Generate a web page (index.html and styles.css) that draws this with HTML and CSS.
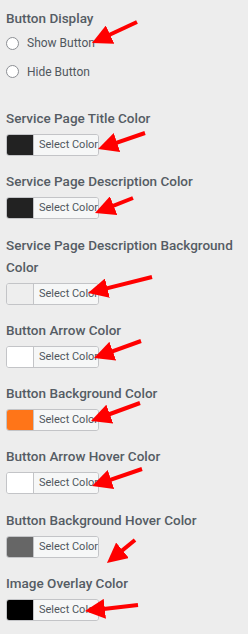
FILE: index.html
```html
<!DOCTYPE html>
<html lang="en">
<head>
    <meta charset="UTF-8">
    <meta name="viewport" content="width=device-width, initial-scale=1.0">
    <title>Service Settings</title>
    <link rel="stylesheet" href="styles.css">
</head>
<body>
    <div class="panel">
        <div class="field field-radio">
            <div class="field-label">Button Display</div>
            <label class="radio-row"><span class="radio"></span>Show Button</label>
            <label class="radio-row"><span class="radio"></span>Hide Button</label>
        </div>

        <div class="field">
            <div class="field-label">Service Page Title Color</div>
            <button class="color-btn"><span class="swatch swatch-dark"></span><span class="color-text">Select Color</span></button>
        </div>

        <div class="field">
            <div class="field-label">Service Page Description Color</div>
            <button class="color-btn"><span class="swatch swatch-dark"></span><span class="color-text">Select Color</span></button>
        </div>

        <div class="field">
            <div class="field-label">Service Page Description Background Color</div>
            <button class="color-btn"><span class="swatch swatch-light"></span><span class="color-text">Select Color</span></button>
        </div>

        <div class="field">
            <div class="field-label">Button Arrow Color</div>
            <button class="color-btn"><span class="swatch swatch-white"></span><span class="color-text">Select Color</span></button>
        </div>

        <div class="field">
            <div class="field-label">Button Background Color</div>
            <button class="color-btn"><span class="swatch swatch-orange"></span><span class="color-text">Select Color</span></button>
        </div>

        <div class="field">
            <div class="field-label">Button Arrow Hover Color</div>
            <button class="color-btn"><span class="swatch swatch-white"></span><span class="color-text">Select Color</span></button>
        </div>

        <div class="field">
            <div class="field-label">Button Background Hover Color</div>
            <button class="color-btn"><span class="swatch swatch-gray"></span><span class="color-text">Select Color</span></button>
        </div>

        <div class="field">
            <div class="field-label">Image Overlay Color</div>
            <button class="color-btn"><span class="swatch swatch-black"></span><span class="color-text">Select Color</span></button>
        </div>
    </div>

    <!-- annotation arrows drawn over the screenshot -->
    <svg class="arrows" width="248" height="634" viewBox="0 0 248 634">
        <defs>
            <marker id="head" viewBox="0 0 20 20" refX="10" refY="10" markerWidth="20" markerHeight="20" markerUnits="userSpaceOnUse" orient="auto">
                <path d="M0,0 L20,10 L0,20 z" fill="#ff0000"/>
            </marker>
        </defs>
        <g stroke="#ff0000" stroke-width="4" marker-end="url(#head)">
            <line x1="137" y1="22" x2="101" y2="38.8"/>
            <line x1="145" y1="133" x2="107.5" y2="145.8"/>
            <line x1="133" y1="198" x2="104.3" y2="209.3"/>
            <line x1="152" y1="277" x2="97.7" y2="290.6"/>
            <line x1="141" y1="341" x2="103.4" y2="354.6"/>
            <line x1="140" y1="403" x2="100.4" y2="417.5"/>
            <line x1="142" y1="469" x2="101.5" y2="482.8"/>
            <line x1="135" y1="540" x2="114.7" y2="556.6"/>
            <line x1="138" y1="605" x2="94.9" y2="609.9"/>
        </g>
    </svg>
</body>
</html>
```

FILE: styles.css
```css
* {
    margin: 0;
    padding: 0;
    box-sizing: border-box;
}

body {
    font-family: Roboto, "Noto Sans", Arial, sans-serif;
    background: #ededed;
    color: #50575e;
    width: 248px;
    height: 634px;
    overflow: hidden;
    position: relative;
}

.panel {
    padding: 7px 6px 0;
    display: flex;
    flex-direction: column;
}

.field {
    display: flex;
    flex-direction: column;
    align-items: flex-start;
    margin-bottom: 14.3px;
}

.field-radio {
    margin-bottom: 21px;
}

.field-label {
    font-size: 13.5px;
    font-weight: 500;
    line-height: 22px;
    color: #555c64;
    margin-bottom: 5px;
}

.field-radio .field-label {
    margin-bottom: 0;
}

.radio-row {
    display: flex;
    align-items: center;
    gap: 8px;
    height: 29px;
    font-size: 12px;
    color: #50575e;
}

.radio-row:first-of-type {
    height: 28px;
}

.radio {
    width: 13px;
    height: 13px;
    border: 1px solid #8c8f94;
    border-radius: 50%;
    background: #fff;
}

.color-btn {
    display: flex;
    align-items: stretch;
    width: 93px;
    height: 22px;
    border: 1px solid #c3c4c7;
    border-radius: 3px;
    background: #f6f7f7;
    overflow: hidden;
    font-family: inherit;
    cursor: pointer;
}

.swatch {
    width: 27px;
    flex-shrink: 0;
    border-right: 1px solid #c3c4c7;
}

.swatch-dark { background: #222222; }
.swatch-light { background: #eeeeee; }
.swatch-white { background: #ffffff; }
.swatch-orange { background: #ff7518; }
.swatch-gray { background: #666666; }
.swatch-black { background: #000000; }

.color-text {
    flex: 1;
    font-size: 11px;
    line-height: 20px;
    white-space: nowrap;
    color: #50575e;
    text-align: left;
    padding-left: 5px;
    background: #f6f7f7;
}

.arrows {
    position: absolute;
    top: 0;
    left: 0;
    pointer-events: none;
}
```
